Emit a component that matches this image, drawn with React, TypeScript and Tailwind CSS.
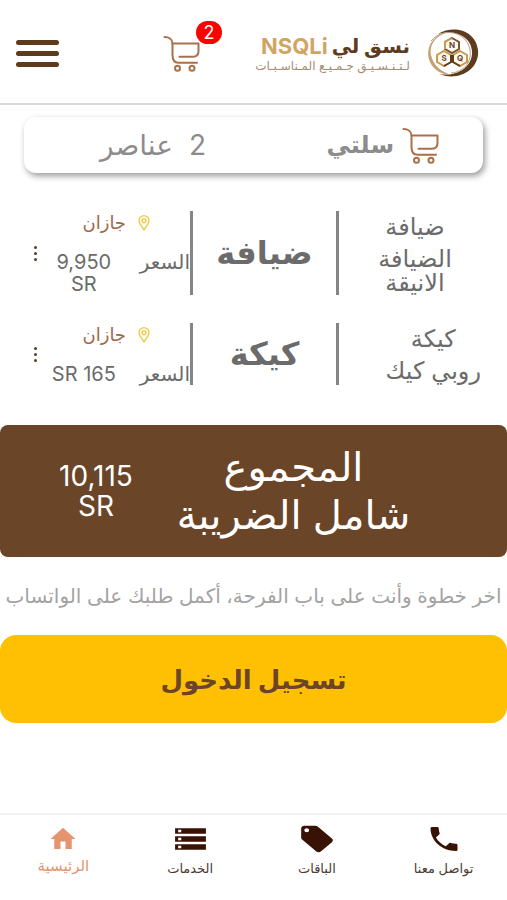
import { MdHome, MdLocalOffer, MdPhone, MdStorage } from "react-icons/md"

type CartItemType = {
  name: string
  provider: string
  category: string
  city: string
  price: string
}

const items: CartItemType[] = [
  { name: 'ضيافة', provider: 'الضيافة الانيقة', category: 'ضيافة', city: 'جازان', price: '9,950 SR' },
  { name: 'كيكة', provider: 'روبي كيك', category: 'كيكة', city: 'جازان', price: 'SR 165' },
]

export default function App() {
  return (
    <div dir="rtl" className="min-h-screen flex flex-col bg-white text-[#6b6b6b] font-['Inter','DejaVu_Sans',sans-serif]">
      <Header />
      <main className="pt-3 pb-6">
        <section className="h-14 mx-6 pr-11 flex items-center rounded-xl bg-white shadow-[2px_3px_6px_rgba(0,0,0,0.4)]">
          <CartIcon />
          <h1 className="mr-2 text-2xl font-bold text-[#8c8c8c]">سلتي</h1>
          <p className="mr-auto ml-[76px] text-[28px] text-[#8c8c8c] flex gap-4">
            <span>2</span>
            <span>عناصر</span>
          </p>
        </section>
        <ul className="mt-[38px] flex flex-col gap-7">
          {items.map(item => <CartItem key={item.name} item={item} />)}
        </ul>
        <section className="min-h-[132px] mt-10 pr-20 pl-14 flex items-center gap-6 rounded-lg bg-[#6a4527] text-white text-center">
          <h2 className="flex-1 text-[40px] leading-[48px]">المجموع<br />شامل الضريبة</h2>
          <p className="w-20 text-[28px] leading-[30px]">10,115 SR</p>
        </section>
        <p className="h-[78px] flex items-center justify-center text-xl text-[#a3a3a3] whitespace-nowrap">
          اخر خطوة وأنت على باب الفرحة، أكمل طلبك على الواتساب
        </p>
        <button className="w-full h-[88px] rounded-2xl bg-[#ffc003] text-[#6a4527] text-[26px] font-bold">تسجيل الدخول</button>
      </main>
      <BottomNav />
    </div>
  )
}

function Header() {
  return (
    <header className="h-[105px] pr-7 pl-4 pt-1 flex items-center border-b-2 border-[#d8d8d8]">
      <a href="#" className="flex items-center gap-4">
        <Emblem />
        <span className="flex flex-col">
          <span className="flex items-center gap-1 text-xl leading-6 font-bold">
            <span className="text-[#5f3b1e]">نسق لي</span>
            <span className="text-[22px] text-[#d0a564]">NSQLi</span>
          </span>
          <span className="text-xs leading-4 text-[#a58d77]">لـتـنـسـيـق جـمـيـع المـناسـبـات</span>
        </span>
      </a>
      <a href="#" aria-label="السلة" className="relative mr-auto ml-[104px]">
        <CartIcon />
        <span className="w-[26px] h-[23px] absolute -top-3.5 -right-[22px] flex items-center justify-center rounded-full bg-[#fd0000] text-white text-lg">2</span>
      </a>
      <button aria-label="القائمة" className="w-[43px] flex flex-col gap-[6px]">
        <span className="h-[5px] rounded-full bg-[#5f3b1e]"></span>
        <span className="h-[5px] rounded-full bg-[#5f3b1e]"></span>
        <span className="h-[5px] rounded-full bg-[#5f3b1e]"></span>
      </button>
    </header>
  )
}

function CartItem({ item }: { item: CartItemType }) {
  return (
    <li className="pr-4 flex text-center">
      <div className="flex-1 flex justify-start">
        <div className="pt-1 px-[10px] text-2xl leading-6">
          <p className="mb-2">{item.name}</p>
          <p>{item.provider}</p>
        </div>
      </div>
      <h3 className="w-[149px] flex items-center justify-center border-x-3 border-[#858585] text-[32px] leading-10 font-bold">{item.category}</h3>
      <div className="w-[190px] pl-8 flex items-center justify-between">
        <div className="self-start">
          <p className="h-6 pr-10 flex items-center gap-3 text-lg text-[#a0674a]">
            <PinIcon />
            {item.city}
          </p>
          <div className="mt-4 flex items-start gap-5 text-xl leading-[22px]">
            <span>السعر</span>
            <span className="w-[72px]">{item.price}</span>
          </div>
        </div>
        <button aria-label="خيارات" className="flex flex-col gap-[3px] p-[2px]">
          <span className="size-[3px] rounded-full bg-[#5f3b1e]"></span>
          <span className="size-[3px] rounded-full bg-[#5f3b1e]"></span>
          <span className="size-[3px] rounded-full bg-[#5f3b1e]"></span>
        </button>
      </div>
    </li>
  )
}

function BottomNav() {
  return (
    <nav className="h-[87px] mt-auto pt-2 grid grid-cols-4 border-t-2 border-[#f3f3f3] text-[13px] text-[#4d3a31]">
      <a href="#" className="flex flex-col items-center gap-1">
        <MdPhone className="w-9 h-8 text-[#371205]" preserveAspectRatio="none" />
        تواصل معنا
      </a>
      <a href="#" className="flex flex-col items-center gap-1">
        <MdLocalOffer className="w-[38px] h-8 text-[#371205]" preserveAspectRatio="none" />
        الباقات
      </a>
      <a href="#" className="flex flex-col items-center gap-1">
        <MdStorage className="w-[37px] h-8 text-[#371205]" preserveAspectRatio="none" />
        الخدمات
      </a>
      <a href="#" className="flex flex-col items-center text-[15px] text-[#e4946e]">
        <MdHome className="w-[30px] h-8" />
        الرئيسية
      </a>
    </nav>
  )
}

function CartIcon() {
  return (
    <svg className="size-[37px]" viewBox="0 0 37 37" fill="none" stroke="#a9704a" strokeWidth="2" strokeLinecap="round" aria-hidden="true">
      <path d="M1.500 2 C6 2 9.500 4.500 9.500 8.500 V20 C9.500 25 11.500 27.800 15.500 27.800 H34" />
      <path d="M9.500 8.500 H35.500 V16 C35.500 20 33.500 21.800 30 21.800 H16.500" strokeLinejoin="round" />
      <circle cx="14.500" cy="33.300" r="2.500" />
      <circle cx="29" cy="33.300" r="2.500" />
    </svg>
  )
}

function PinIcon() {
  return (
    <svg className="w-3 h-4" viewBox="0 0 12 16" fill="none" stroke="#f0cd55" strokeWidth="1.500" aria-hidden="true">
      <path d="M6 15 C4 11.500 1 9 1 5.800 A5 5 0 0 1 11 5.800 C11 9 8 11.500 6 15 Z" />
      <circle cx="6" cy="5.800" r="2" />
    </svg>
  )
}

function Emblem() {
  return (
    <svg className="w-[53px] h-[49px]" viewBox="0 0 53 49" fill="none" aria-hidden="true">
      <path d="M12 5 C28 -5 50 2 52 21 C54 40 33 53 13 45 C31 48 47 38 46 22 C45 7 28 0 12 5 Z" fill="#5f3b1e" />
      <path d="M22 3 C7 5 -2 20 4 33 C8 42 17 46 26 46 C15 43 7 36 5 26 C3 15 10 7 22 3 Z" fill="#c4a274" />
      <path d="M5 12 C18 -3 41 3 44 21 C46 34 37 43 25 44" stroke="#b39c84" />
      <g strokeWidth="2" fill="#fffaf0">
        <path d="M26 9 L33 13 V20 L26 24 L19 20 V13 Z" stroke="#7a5230" />
        <path d="M18 22 L25 26 V33 L18 37 L11 33 V26 Z" stroke="#c89a50" />
        <path d="M34 22 L41 26 V33 L34 37 L27 33 V26 Z" stroke="#c89a50" />
        <path d="M19 20 V13 L26 9" stroke="#c89a50" />
        <path d="M18 37 L25 33 V26 M27 26 V33 L34 37" stroke="#5f3b1e" />
      </g>
      <g fill="#6a4527" fontSize="8" fontWeight="700" textAnchor="middle">
        <text x="26" y="19">N</text>
        <text x="18" y="32">S</text>
        <text x="34" y="32">Q</text>
      </g>
    </svg>
  )
}
